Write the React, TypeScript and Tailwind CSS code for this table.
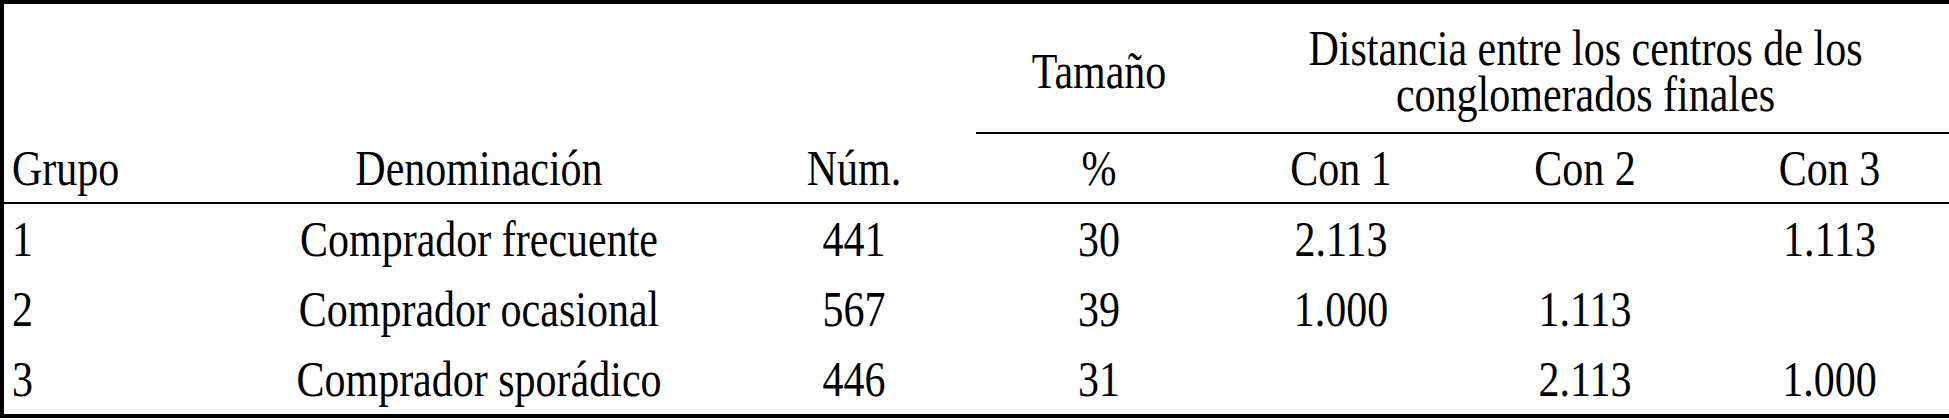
import React from "react";

const rows = [
  { g: "1", d: "Comprador frecuente", n: "441", p: "30", c1: "2.113", c2: "", c3: "1.113" },
  { g: "2", d: "Comprador ocasional", n: "567", p: "39", c1: "1.000", c2: "1.113", c3: "" },
  { g: "3", d: "Comprador sporádico", n: "446", p: "31", c1: "", c2: "2.113", c3: "1.000" },
];

const cols = "grid grid-cols-[222px_506px_244px_246px_238px_250px_1fr]";

// the source text is a bit taller than plain Times, so stretch it vertically
const T = ({ children, tight }: { children: React.ReactNode; tight?: boolean }) => (
  <span className={tight ? "inline-block scale-y-[1.2] leading-[38px]" : "inline-block scale-y-[1.2]"}>
    {children}
  </span>
);

export default function App() {
  return (
    <div className="w-[1949px] h-[420px] bg-white text-black text-[42px] leading-none font-['Liberation_Serif',serif]">
      <div className="h-[418px] border-t-4 border-l-4 border-b-4 border-black">
        {/* header */}
        <div className={`${cols} grid-rows-[130px_68px]`}>
          <div />
          <div />
          <div />
          <div className="flex items-center justify-center border-b-2 border-black pt-[6px]">
            <T>Tamaño</T>
          </div>
          <div className="col-span-3 flex flex-col items-center justify-center gap-[8px] border-b-2 border-black pt-[6px]">
            <T tight>Distancia entre los centros de los</T>
            <T tight>conglomerados finales</T>
          </div>
          <div className="flex items-center pl-[8px]"><T>Grupo</T></div>
          <div className="flex items-center justify-center"><T>Denominación</T></div>
          <div className="flex items-center justify-center"><T>Núm.</T></div>
          <div className="flex items-center justify-center"><T>%</T></div>
          <div className="flex items-center justify-center"><T>Con 1</T></div>
          <div className="flex items-center justify-center"><T>Con 2</T></div>
          <div className="flex items-center justify-center"><T>Con 3</T></div>
        </div>
        {/* body */}
        <div className="border-t-2 border-black">
          {rows.map((r) => (
            <div key={r.g} className={`${cols} h-[70px] items-center`}>
              <div className="pl-[8px]"><T>{r.g}</T></div>
              <div className="text-center"><T>{r.d}</T></div>
              <div className="text-center"><T>{r.n}</T></div>
              <div className="text-center"><T>{r.p}</T></div>
              <div className="text-center"><T>{r.c1}</T></div>
              <div className="text-center"><T>{r.c2}</T></div>
              <div className="text-center"><T>{r.c3}</T></div>
            </div>
          ))}
        </div>
      </div>
    </div>
  );
}
